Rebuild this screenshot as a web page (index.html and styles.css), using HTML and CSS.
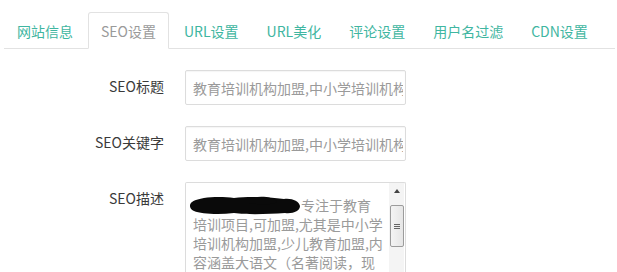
FILE: index.html
```html
<!DOCTYPE html>
<html lang="zh-CN">
<head>
<meta charset="utf-8">
<title>SEO设置</title>
<link rel="stylesheet" href="styles.css">
</head>
<body>
<div class="page">
  <ul class="tabs">
    <li class="tab"><a>网站信息</a></li>
    <li class="tab active"><a>SEO设置</a></li>
    <li class="tab"><a>URL设置</a></li>
    <li class="tab"><a>URL美化</a></li>
    <li class="tab"><a>评论设置</a></li>
    <li class="tab"><a>用户名过滤</a></li>
    <li class="tab"><a>CDN设置</a></li>
  </ul>
  <form class="form">
    <div class="row">
      <label class="label">SEO标题</label>
      <input class="input" type="text" value="教育培训机构加盟,中小学培训机构加盟,少儿教育加盟">
    </div>
    <div class="row">
      <label class="label">SEO关键字</label>
      <input class="input" type="text" value="教育培训机构加盟,中小学培训机构加盟,少儿教育加盟">
    </div>
    <div class="row last">
      <label class="label">SEO描述</label>
      <div class="ta">
        <div class="ta-text">
          <div class="line"><svg class="blob" width="112" height="19" viewBox="0 0 112 19"><path d="M3 6 C10 1 30 0 45 2 C60 0 80 1 95 3 C103 2 110 5 111 10 C111 15 104 18 96 17 C80 18 60 19 45 17 C30 19 12 18 5 15 C0 13 0 8 3 6 Z" fill="#0a0a0a"/><path d="M60 3 C70 -1 85 1 88 6 C84 9 70 9 60 7 Z" fill="#0a0a0a"/></svg>专注于教育</div>
          <div class="line">培训项目,可加盟,尤其是中小学</div>
          <div class="line">培训机构加盟,少儿教育加盟,内</div>
          <div class="line">容涵盖大语文（名著阅读，现</div>
        </div>
        <div class="ta-bar">
          <span class="arrow"></span>
          <span class="thumb"><span class="grip"></span><span class="grip"></span><span class="grip"></span></span>
        </div>
      </div>
    </div>
  </form>
</div>
</body>
</html>
```
FILE: styles.css
```css
html, body {
  margin: 0;
  padding: 0;
  background: #fff;
}
body {
  font-family: "Noto Sans CJK SC", "Noto Sans", sans-serif;
  font-size: 14px;
  color: #333;
  height: 272px;
  overflow: hidden;
}
.page {
  padding-top: 12px;
}
.tabs {
  list-style: none;
  margin: 0 2px 0 4px;
  padding: 0;
  display: flex;
  border-bottom: 1px solid #e2e2e2;
}
.tab {
  flex: 0 0 auto;
  margin-right: 2px;
  margin-bottom: -1px;
  white-space: nowrap;
}
.tab a {
  display: block;
  padding: 8px 12px 7px;
  line-height: 20px;
  color: #3fb6a1;
  border: 1px solid transparent;
  border-radius: 3px 3px 0 0;
}
.tab.active a {
  color: #9a9a9a;
  border-color: #e2e2e2;
  border-bottom-color: #fff;
  background: #fff;
}
.form {
  padding-top: 21px;
}
.row {
  display: flex;
  align-items: flex-start;
  margin-bottom: 21px;
}
.row.last {
  margin-bottom: 0;
}
.label {
  width: 164px;
  text-align: right;
  padding-top: 6px;
  line-height: 20px;
  margin-right: 21px;
  color: #3a3a3a;
}
.input {
  box-sizing: border-box;
  width: 221px;
  height: 35px;
  margin: 0;
  padding: 0 2px 0 7px;
  border: 1px solid #dcdcdc;
  border-radius: 2px;
  font-family: "Noto Sans CJK SC", sans-serif;
  font-size: 14px;
  color: #9a9a9a;
  box-shadow: inset 0 1px 1px rgba(0,0,0,0.04);
  outline: none;
}
.ta {
  box-sizing: border-box;
  width: 221px;
  height: 92px;
  border: 1px solid #dcdcdc;
  border-bottom: none;
  border-radius: 2px 2px 0 0;
  display: flex;
  overflow: hidden;
}
.ta-text {
  flex: 1;
  padding: 13px 0 0 7px;
  color: #9a9a9a;
  line-height: 19px;
  font-size: 14px;
  overflow: hidden;
}
.line {
  white-space: nowrap;
}
.blob {
  vertical-align: -4px;
  margin-left: -4px;
}
.ta-bar {
  width: 15px;
  margin-right: 1px;
  display: flex;
  flex-direction: column;
  align-items: center;
  background: #f4f4f4;
}
.arrow {
  margin-top: 6px;
  width: 0;
  height: 0;
  border-left: 3px solid transparent;
  border-right: 3px solid transparent;
  border-bottom: 4px solid #444;
}
.thumb {
  box-sizing: border-box;
  margin-top: 12px;
  width: 14px;
  height: 42px;
  border: 1px solid #9c9c9c;
  border-radius: 2px;
  background: linear-gradient(to right, #f4f4f4, #e6e6e6);
  display: flex;
  flex-direction: column;
  align-items: center;
  justify-content: center;
  gap: 1px;
}
.grip {
  width: 6px;
  height: 1px;
  background: #666;
}
```
